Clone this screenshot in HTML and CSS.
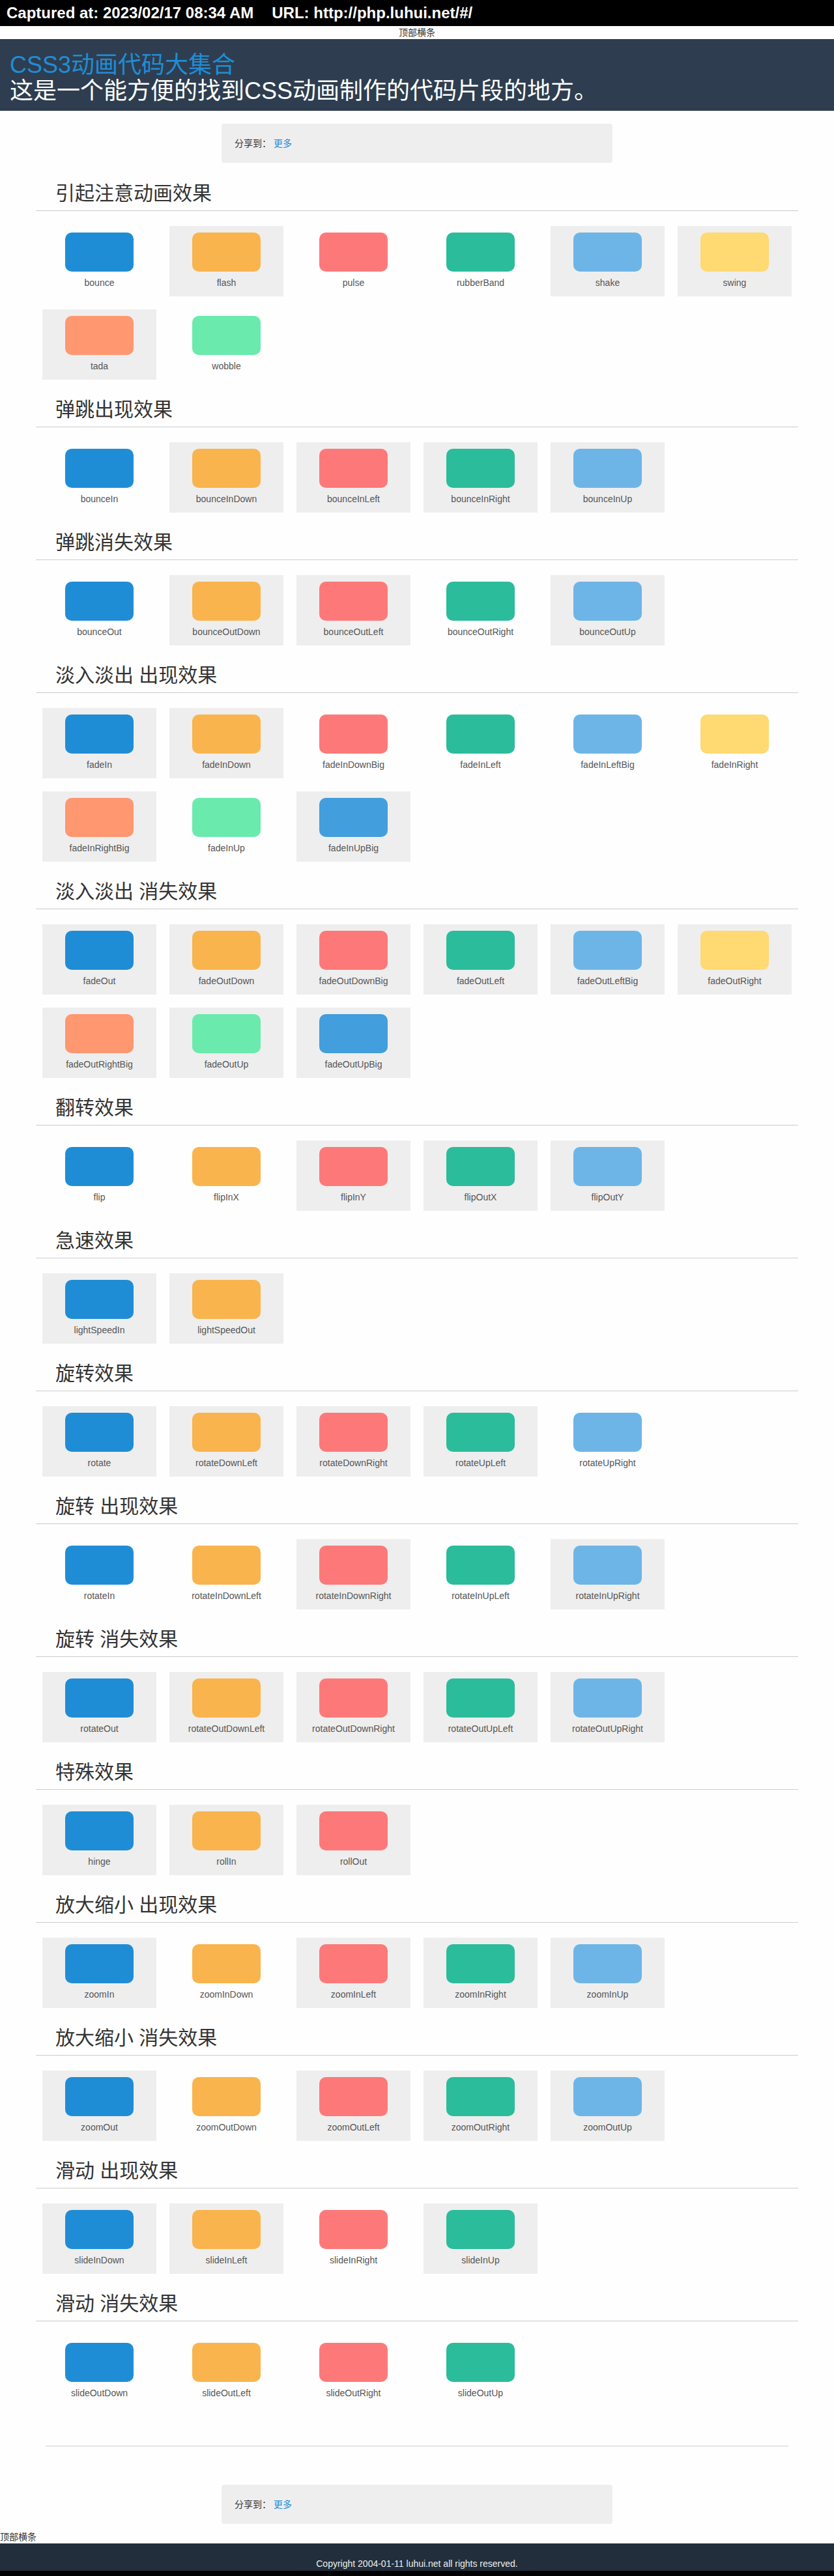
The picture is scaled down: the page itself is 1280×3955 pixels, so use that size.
FILE: index.html
```html
<!DOCTYPE html>
<html lang="zh-CN">
<head>
<meta charset="utf-8">
<meta name="viewport" content="width=device-width, initial-scale=1">
<title>CSS3动画代码大集合</title>
<link rel="stylesheet" href="styles.css">
</head>
<body>
<div class="capture"><span>Captured at: 2023/02/17 08:34 AM</span><span>URL: http://php.luhui.net/#/</span></div>
<div class="strip strip-center">顶部横条</div>
<header class="banner">
<h1><a href="#">CSS3动画代码大集合</a><br>这是一个能方便的找到CSS动画制作的代码片段的地方。</h1>
</header>
<div class="share">分享到： <a href="#">更多</a></div>
<main class="container">
<section><h2>引起注意动画效果</h2><ul class="cards">
<li>bounce</li><li class="on">flash</li><li>pulse</li><li>rubberBand</li><li class="on">shake</li><li class="on">swing</li><li class="on">tada</li><li>wobble</li>
</ul></section>
<section><h2>弹跳出现效果</h2><ul class="cards">
<li>bounceIn</li><li class="on">bounceInDown</li><li class="on">bounceInLeft</li><li class="on">bounceInRight</li><li class="on">bounceInUp</li>
</ul></section>
<section><h2>弹跳消失效果</h2><ul class="cards">
<li>bounceOut</li><li class="on">bounceOutDown</li><li class="on">bounceOutLeft</li><li>bounceOutRight</li><li class="on">bounceOutUp</li>
</ul></section>
<section><h2>淡入淡出 出现效果</h2><ul class="cards">
<li class="on">fadeIn</li><li class="on">fadeInDown</li><li>fadeInDownBig</li><li>fadeInLeft</li><li>fadeInLeftBig</li><li>fadeInRight</li><li class="on">fadeInRightBig</li><li>fadeInUp</li><li class="on">fadeInUpBig</li>
</ul></section>
<section><h2>淡入淡出 消失效果</h2><ul class="cards">
<li class="on">fadeOut</li><li class="on">fadeOutDown</li><li class="on">fadeOutDownBig</li><li class="on">fadeOutLeft</li><li class="on">fadeOutLeftBig</li><li class="on">fadeOutRight</li><li class="on">fadeOutRightBig</li><li class="on">fadeOutUp</li><li class="on">fadeOutUpBig</li>
</ul></section>
<section><h2>翻转效果</h2><ul class="cards">
<li>flip</li><li>flipInX</li><li class="on">flipInY</li><li class="on">flipOutX</li><li class="on">flipOutY</li>
</ul></section>
<section><h2>急速效果</h2><ul class="cards">
<li class="on">lightSpeedIn</li><li class="on">lightSpeedOut</li>
</ul></section>
<section><h2>旋转效果</h2><ul class="cards">
<li class="on">rotate</li><li class="on">rotateDownLeft</li><li class="on">rotateDownRight</li><li class="on">rotateUpLeft</li><li>rotateUpRight</li>
</ul></section>
<section><h2>旋转 出现效果</h2><ul class="cards">
<li>rotateIn</li><li>rotateInDownLeft</li><li class="on">rotateInDownRight</li><li>rotateInUpLeft</li><li class="on">rotateInUpRight</li>
</ul></section>
<section><h2>旋转 消失效果</h2><ul class="cards">
<li class="on">rotateOut</li><li class="on">rotateOutDownLeft</li><li class="on">rotateOutDownRight</li><li class="on">rotateOutUpLeft</li><li class="on">rotateOutUpRight</li>
</ul></section>
<section><h2>特殊效果</h2><ul class="cards">
<li class="on">hinge</li><li class="on">rollIn</li><li class="on">rollOut</li>
</ul></section>
<section><h2>放大缩小 出现效果</h2><ul class="cards">
<li class="on">zoomIn</li><li>zoomInDown</li><li class="on">zoomInLeft</li><li class="on">zoomInRight</li><li class="on">zoomInUp</li>
</ul></section>
<section><h2>放大缩小 消失效果</h2><ul class="cards">
<li class="on">zoomOut</li><li>zoomOutDown</li><li class="on">zoomOutLeft</li><li class="on">zoomOutRight</li><li class="on">zoomOutUp</li>
</ul></section>
<section><h2>滑动 出现效果</h2><ul class="cards">
<li class="on">slideInDown</li><li class="on">slideInLeft</li><li>slideInRight</li><li class="on">slideInUp</li>
</ul></section>
<section><h2>滑动 消失效果</h2><ul class="cards">
<li>slideOutDown</li><li>slideOutLeft</li><li>slideOutRight</li><li>slideOutUp</li>
</ul></section>
<hr>
</main>
<div class="share">分享到： <a href="#">更多</a></div>
<div class="strip">顶部横条</div>
<footer class="footer">Copyright 2004-01-11 luhui.net all rights reserved.</footer>
<div class="end"></div>
</body>
</html>
```
FILE: styles.css
```css
* {
  box-sizing: border-box;
}

body {
  margin: 0;
  background: #fefefe;
  color: #333;
  font: 14px/20px "Liberation Sans", Arial, "Noto Sans CJK SC", sans-serif;
}

a {
  color: #1f8dd6;
  text-decoration: none;
}

.capture {
  display: flex;
  gap: 28px;
  padding: 0 10px;
  background: #000;
  color: #fff;
  font-size: 24px;
  font-weight: bold;
  line-height: 40px;
}

.strip {
  height: 20px;
}

.strip-center {
  text-align: center;
}

.banner {
  padding: 20px 15px 9px;
  border-bottom: 1px solid #1f2d3d;
  background: #2e3e50;
  color: #fff;
}

h1 {
  margin: 0;
  font-size: 36px;
  font-weight: normal;
  line-height: 40px;
}

.share {
  max-width: 600px;
  margin: 20px auto 10px;
  padding: 20px;
  border-radius: 4px;
  background: #eee;
}

.container {
  max-width: 1170px;
  margin: 0 auto;
}

h2 {
  margin: 0;
  padding: 20px 30px 10px;
  border-bottom: 1px solid #ccc;
  font-size: 30px;
  font-weight: normal;
  line-height: 33px;
}

.cards {
  display: grid;
  grid-template-columns: repeat(6, 1fr);
  gap: 20px;
  margin: 0;
  padding: 23px 10px 9px;
  list-style: none;
}

.cards li {
  padding: 10px 0 12px;
  color: #555;
  line-height: 17px;
  text-align: center;
}

.cards .on {
  background: #eee;
}

.cards li::before {
  content: "";
  display: block;
  width: 60%;
  height: 60px;
  margin: 0 auto 9px;
  border-radius: 10px;
  background: #1f8dd6;
}

.cards li:nth-child(2)::before { background: #fab44d; }
.cards li:nth-child(3)::before { background: #fd7979; }
.cards li:nth-child(4)::before { background: #2bbc9b; }
.cards li:nth-child(5)::before { background: #6db5e6; }
.cards li:nth-child(6)::before { background: #ffd971; }
.cards li:nth-child(7)::before { background: #ff9770; }
.cards li:nth-child(8)::before { background: #6beaae; }
.cards li:nth-child(9)::before { background: #429edc; }

hr {
  margin: 51px 15px 59px;
  border: 0;
  border-top: 1px solid #ccc;
}

.footer {
  padding: 21px 15px 1px;
  background: #222e3b;
  color: #eee;
  text-align: center;
}

.end {
  height: 8px;
  background: #000;
}
```
